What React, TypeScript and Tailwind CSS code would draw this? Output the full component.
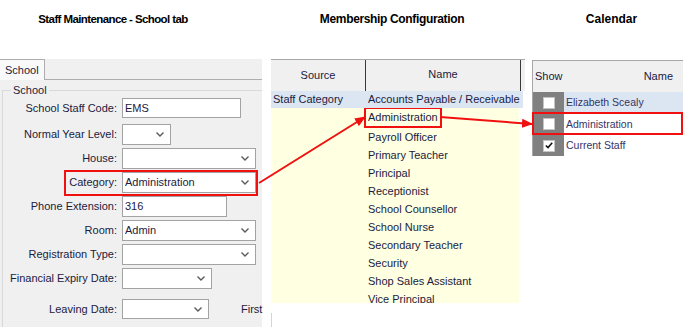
const STAFF_ROWS = [
  { label: 'Normal Year Level:', width: 'w-[49px]', select: true },
  { label: 'House:', width: 'w-[134px]', select: true },
  { label: 'Category:', width: 'w-[134px]', select: true, value: 'Administration', marked: true },
  { label: 'Phone Extension:', width: 'w-[105px]', value: '316' },
  { label: 'Room:', width: 'w-[134px]', select: true, value: 'Admin' },
  { label: 'Registration Type:', width: 'w-[134px]', select: true },
  { label: 'Financial Expiry Date:', width: 'w-[90px]', select: true },
];

const NAMES = [
  'Payroll Officer',
  'Primary Teacher',
  'Principal',
  'Receptionist',
  'School Counsellor',
  'School Nurse',
  'Secondary Teacher',
  'Security',
  'Shop Sales Assistant',
  'Vice Principal',
];

function Chevron() {
  return (
    <svg width="8" height="5" viewBox="0 0 8 5" className="shrink-0">
      <polyline points="0.5,0.5 4,4 7.5,0.5" fill="none" stroke="#5a5a5a" strokeWidth="1.4" />
    </svg>
  );
}

function Field({ width, value, select, h = 'h-[21px]' }: { width: string; value?: string; select?: boolean; h?: string }) {
  return (
    <div className={`${width} ${h} ml-[5px] flex items-center justify-between border border-[#a3a3a3] bg-white pl-[2px] pr-[6px]`}>
      <span>{value ?? ''}</span>
      {select && <Chevron />}
    </div>
  );
}

function Label({ children }: { children: string }) {
  return <div className="w-[114px] shrink-0 text-right">{children}</div>;
}

function CheckBox({ checked }: { checked?: boolean }) {
  return (
    <div className="flex h-[12px] w-[12px] items-center justify-center border border-[#c4c4c4] bg-white">
      {checked && (
        <svg width="8" height="7" viewBox="0 0 8 7">
          <polyline points="0.8,3.5 3,5.6 7.2,0.8" fill="none" stroke="#111" strokeWidth="1.6" />
        </svg>
      )}
    </div>
  );
}

export default function App() {
  return (
    <div className="relative flex h-[327px] w-[684px] overflow-hidden bg-white font-['Liberation_Sans',Arial,sans-serif] text-[11px] leading-[13px] text-[#1b1b40]">
      {/* staff maintenance */}
      <div className="flex w-[262px] shrink-0 flex-col">
        <div className="h-[59px] pt-[13px] pr-[36px] text-center text-[11.5px] font-bold tracking-[-0.6px] text-black">
          Staff Maintenance - School tab
        </div>
        <div className="flex h-[21px] bg-[#f0f0f0]">
          <div className="flex w-[45px] items-center border-t border-r border-[#adadad] bg-[#f9f9f9] pl-[5px]">School</div>
          <div className="flex-1 border-b border-[#adadad]" />
        </div>
        <div className="flex-1 bg-[#f0f0f0]">
          <fieldset className="ml-[2px] mt-[3px] h-full border-t border-l border-[#d9d9d9]">
            <legend className="ml-[8px] px-[2px] leading-[14px]">School</legend>
            <div className="flex flex-col pt-[1px]">
              <div className="flex items-center">
                <Label>School Staff Code:</Label>
                <Field width="w-[119px]" h="h-[20px]" value="EMS" />
              </div>
              <div className="mt-[6px] flex flex-col gap-[3px]">
                {STAFF_ROWS.map((r) => (
                  <div key={r.label} className="relative flex items-center">
                    <Label>{r.label}</Label>
                    <Field width={r.width} value={r.value} select={r.select} />
                    {r.marked && (
                      <div className="absolute left-[61px] top-[-2px] h-[26px] w-[194px] border-2 border-[#f01010]" />
                    )}
                  </div>
                ))}
              </div>
              <div className="mt-[10px] flex items-center whitespace-nowrap">
                <Label>Leaving Date:</Label>
                <Field width="w-[87px]" h="h-[20px]" select />
                <span className="ml-[32px]">First</span>
              </div>
            </div>
          </fieldset>
        </div>
      </div>

      {/* membership configuration */}
      <div className="ml-[9px] flex w-[254px] shrink-0 flex-col">
        <div className="h-[59px] pt-[13px] pr-[12px] text-center text-[12px] font-bold tracking-[-0.35px] text-black">
          Membership Configuration
        </div>
        <div className="flex h-[32px] border-t border-[#a8a8a8] bg-[#f0f0f0]">
          <div className="flex w-[94px] items-center justify-center">Source</div>
          <div className="flex w-[156px] items-center justify-center border-x border-[#3a3a3a] pb-[2px]">Name</div>
        </div>
        <div className="flex h-[17px] w-[252px] items-center bg-[#dce6f3]">
          <div className="w-[94px] pl-[2px]">Staff Category</div>
          <div className="pl-[3px]">Accounts Payable / Receivable</div>
        </div>
        <div className="h-[195px] w-[248px] overflow-hidden bg-[#ffffe1] pl-[94px]">
          <div className="flex h-[20px] items-start">
            <span className="-ml-[1px] -mt-[1px] flex h-[21px] items-center border-2 border-[#f01010] px-[2px]">Administration</span>
          </div>
          {NAMES.map((n) => (
            <div key={n} className="flex h-[18px] items-center pl-[3px]">
              {n}
            </div>
          ))}
        </div>
        <div className="mt-[10px] h-[14px] border-l border-[#d4d4d4]" />
      </div>

      {/* calendar */}
      <div className="ml-[7px] flex w-[151px] shrink-0 flex-col">
        <div className="h-[60px] pt-[13px] pl-[8px] text-center text-[12px] font-bold text-black">Calendar</div>
        <div className="flex flex-col border-t border-l border-[#a8a8a8] text-[10.5px]">
          <div className="flex h-[31px] items-center justify-between bg-[#f0f0f0] pl-[2px] pr-[10px] text-[11px]">
            <span>Show</span>
            <span>Name</span>
          </div>
          <div className="flex h-[21px]">
            <div className="flex w-[31px] items-center justify-center bg-[#808080]">
              <CheckBox />
            </div>
            <div className="flex flex-1 items-center bg-[#dce6f3] pl-[2px] text-[#343466]">Elizabeth Scealy</div>
          </div>
          <div className="relative flex h-[22px]">
            <div className="flex w-[31px] items-center justify-center bg-[#808080]">
              <CheckBox />
            </div>
            <div className="flex flex-1 items-center pl-[2px] text-[#343466]">Administration</div>
            <div className="absolute -left-[1px] -top-[1px] h-[23px] w-[151px] border-2 border-[#f01010]" />
          </div>
          <div className="flex h-[21px]">
            <div className="flex w-[31px] items-center justify-center bg-[#808080]">
              <CheckBox checked />
            </div>
            <div className="flex flex-1 items-center pl-[2px] text-[#343466]">Current Staff</div>
          </div>
        </div>
      </div>

      {/* annotation arrows */}
      <svg className="pointer-events-none absolute inset-0" width="684" height="327" viewBox="0 0 684 327">
        <defs>
          <marker id="ah" markerUnits="userSpaceOnUse" markerWidth="11" markerHeight="9" refX="10" refY="4.5" orient="auto">
            <path d="M0,0 L11,4.5 L0,9 z" fill="#f01010" />
          </marker>
        </defs>
        <line x1="259" y1="183" x2="365" y2="117" stroke="#f01010" strokeWidth="2" markerEnd="url(#ah)" />
        <line x1="440" y1="117" x2="532" y2="124" stroke="#f01010" strokeWidth="2" markerEnd="url(#ah)" />
      </svg>
    </div>
  );
}
